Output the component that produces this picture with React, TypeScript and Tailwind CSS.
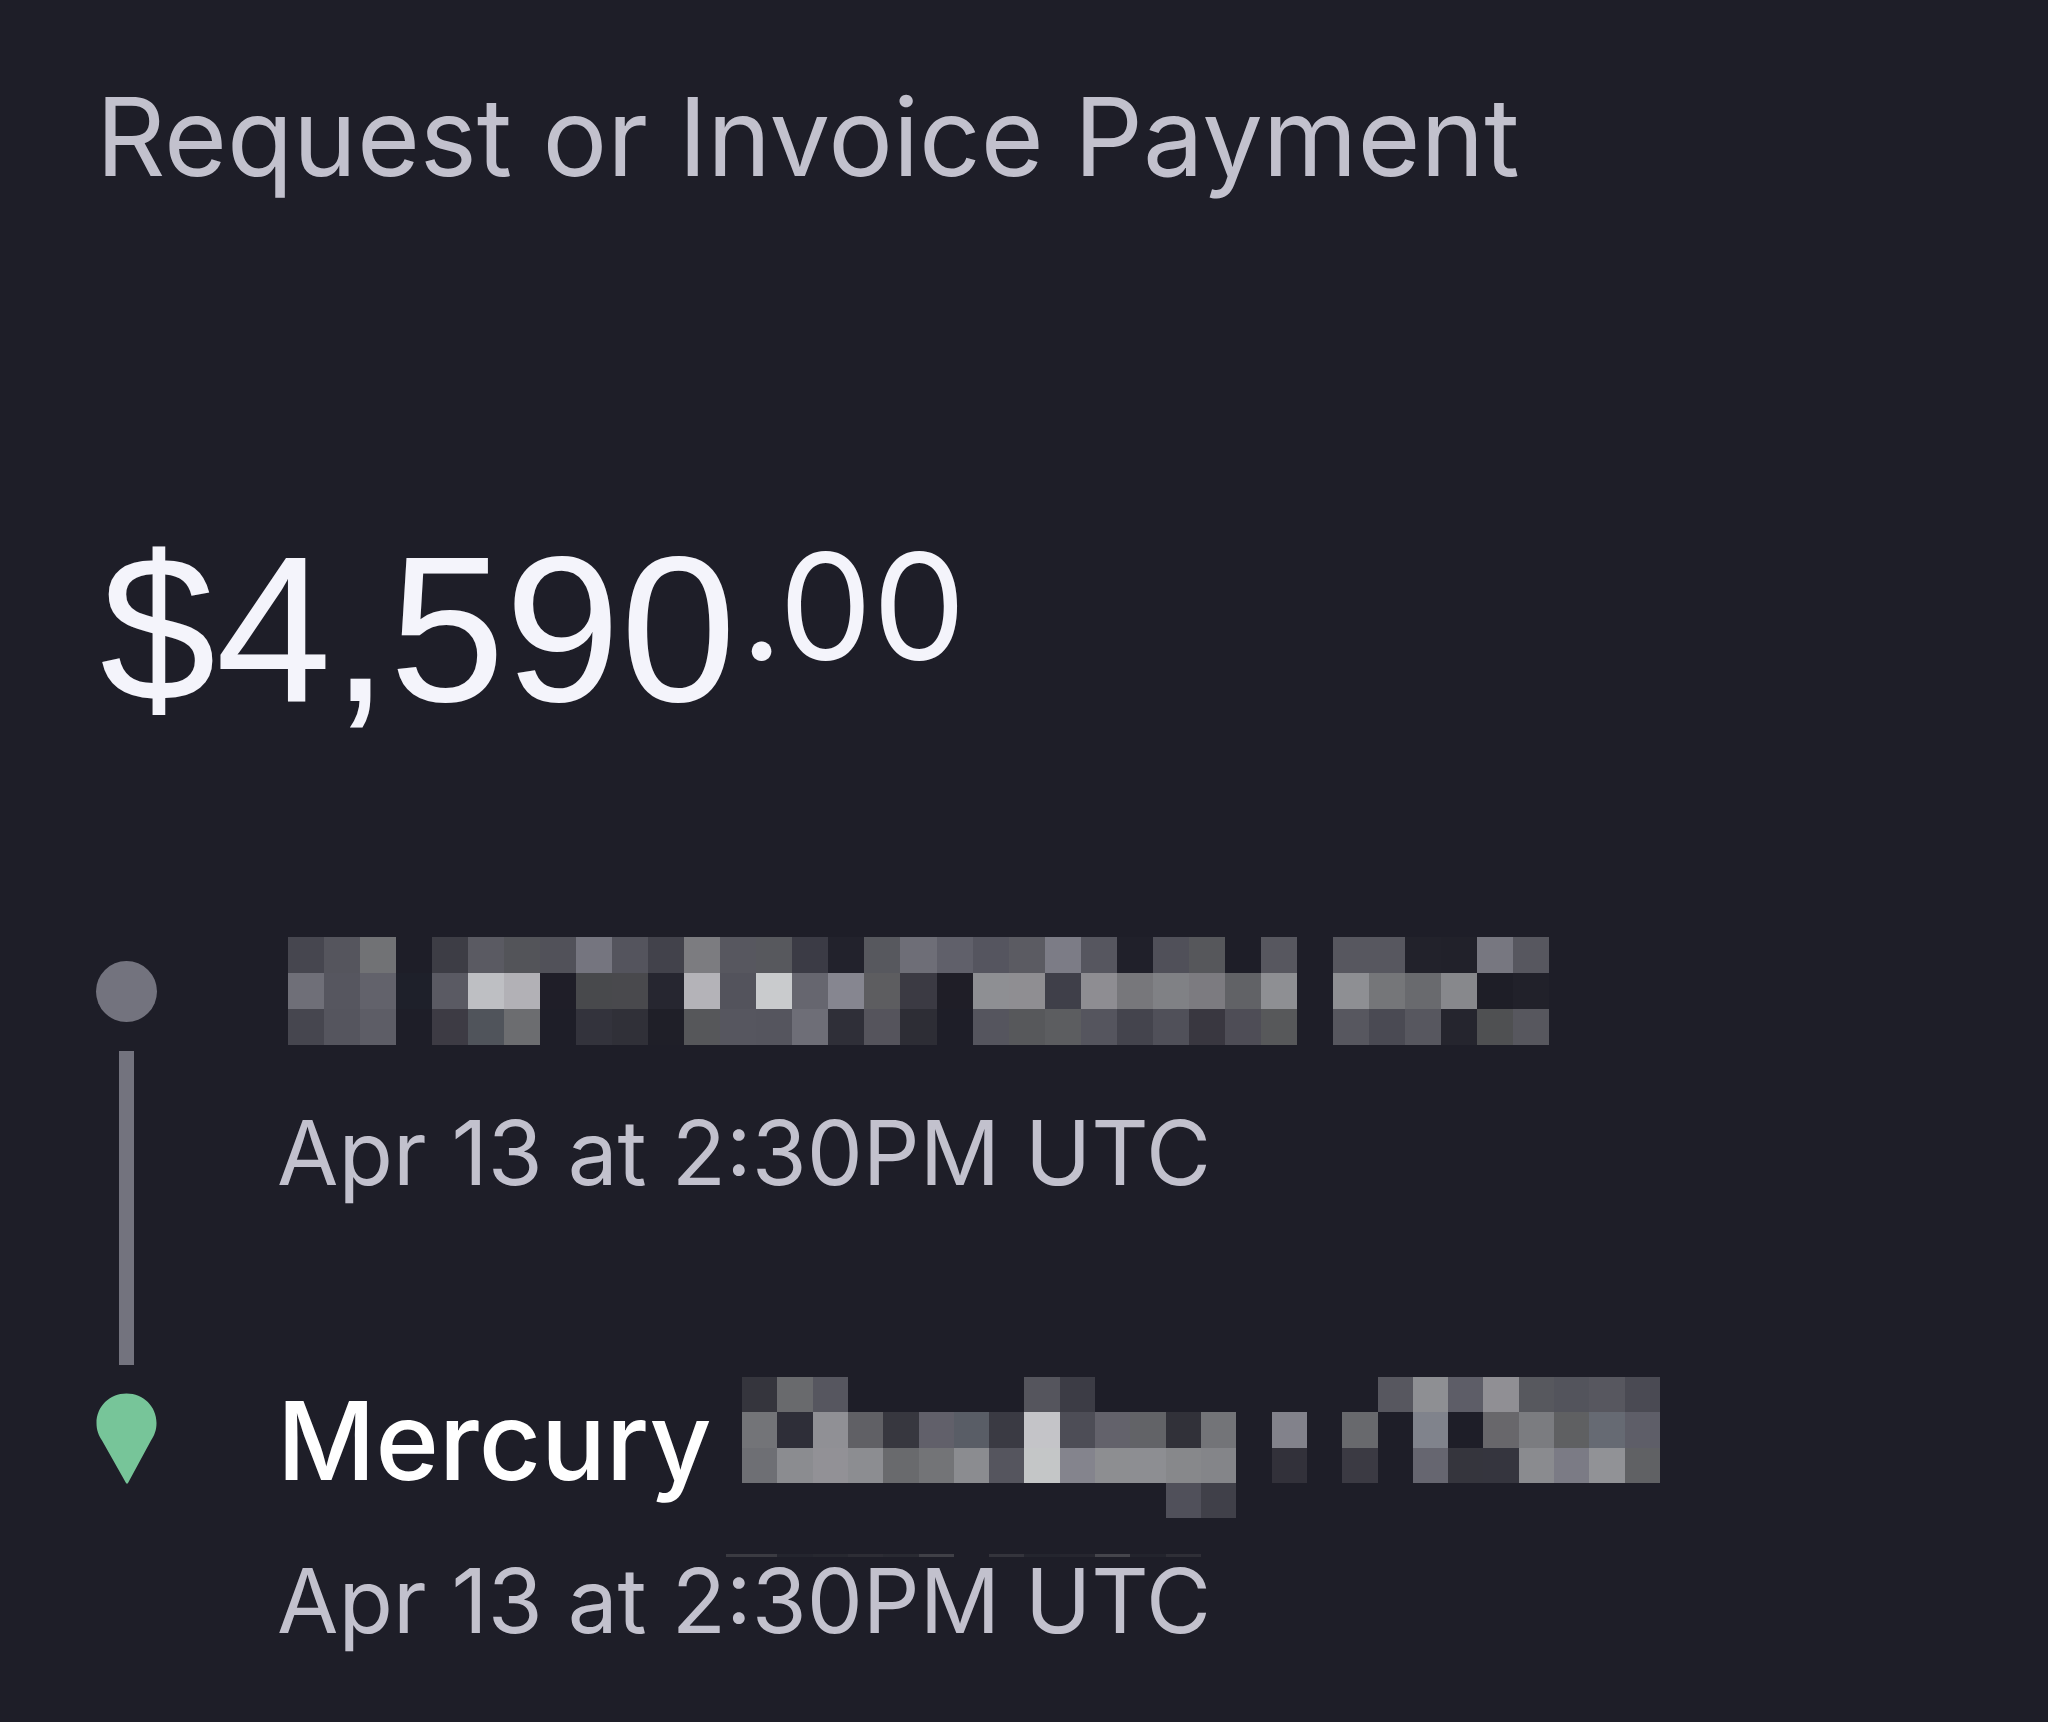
import React from 'react';

interface MosaicProps {
  label: string;
  rows: string[];
  cell: number;
  className: string;
  children?: React.ReactNode;
}

interface StepProps {
  marker: 'dot' | 'pin';
  date: string;
  className?: string;
  children: React.ReactNode;
}

const BLANK = '------';

// One hex colour per cell, left to right
const SENDER_ROWS = [
  '46464f 55555d 717275 ------ 3d3d45 5a5a62 535459 515159 75757f 54545d 42424b 7c7c80 57575f 57585d 3b3b45 22222c 57585e 6e6e77 60606a 55555f 5b5b62 7c7c86 56565f 20202a 505059 56575b ------ 57575f ------ 57575f 57575f 22222b 21212a 777780 57575f',
  '6f6f78 56565f 62626b 1e202a 5a5a63 bebfc3 b2b1b6 1f1e28 48494c 49494d 262630 b4b3b8 53535c c9cbcd 66666f 868690 5d5d60 3b3a43 1f1e27 8e8f93 8f8e92 3f3f49 8e8d92 77777b 808185 7c7b80 616266 8e8f93 ------ 8e8f93 757679 696a6e 87888c 1e1e27 21212a',
  '46464f 55555e 5d5d66 ------ 3d3b44 50545b 6c6d70 ------ 33333c 303038 1f1f28 56575a 56565f 55555e 6e6e77 2f2f38 55545c 2d2d35 ------ 55555e 57585b 5c5d60 55555e 44444d 505059 393740 4e4d56 57585a ------ 57575f 4a4a53 57575f 25252e 4f5052 57575e',
];

const ACCOUNT_ROWS = [
  '35353d 696a6d 56565f ------ ------ ------ ------ ------ 55555d 3c3c45 ------ ------ ------ ------ ------ ------ ------ ------ 57575f 8e8f93 5d5d67 908f94 57585e 53545c 57575f 4a4a53',
  '737478 2e2e38 909095 606065 37373f 61606a 595d66 3a3a43 c4c4c8 4d4d56 63626b 626367 313139 737478 ------ 82828b ------ 68696d ------ 80838c ------ 68676b 7b7c80 5f6062 666a73 5e5e68',
  '6e6f74 8b8c90 929196 8c8d91 696a6d 737477 8b8c90 55555e c4c6c7 84848d 8d8e91 8d8e92 87888b 848589 ------ 32313a ------ 3b3a43 ------ 666670 35353d 35353e 8a8b8f 7b7b85 919296 606164',
  '------ ------ ------ ------ ------ ------ ------ ------ ------ ------ ------ ------ 50505a 404049 ------ ------ ------ ------ ------ ------ ------ ------ ------ ------ ------ ------',
];

// Thin strip left under the account name: x, width, colour
const STRIP: [number, number, string][] = [
  [-16, 51, '#3b3b42'],
  [35, 35, '#24252e'],
  [70, 35, '#272830'],
  [105, 35, '#2d2d35'],
  [140, 35, '#292a32'],
  [175, 35, '#404047'],
  [245, 35, '#34343c'],
  [280, 35, '#24252e'],
  [315, 35, '#26262f'],
  [350, 35, '#45454c'],
  [385, 35, '#23242d'],
  [420, 35, '#2f2f37'],
];

const Mosaic: React.FC<MosaicProps> = ({ label, rows, cell, className, children }) => {
  const cols = rows[0].split(' ').length;
  return (
    <svg
      role="img"
      aria-label={label}
      viewBox={`0 0 ${cols * cell} ${rows.length * cell}`}
      preserveAspectRatio="none"
      shapeRendering="crispEdges"
      className={className}
    >
      {rows.map((row, y) =>
        row.split(' ').map((color, x) =>
          color === BLANK ? null : (
            <rect key={`${x}-${y}`} x={x * cell} y={y * cell} width={cell} height={cell} fill={`#${color}`} />
          ),
        ),
      )}
      {children}
    </svg>
  );
};

const Step: React.FC<StepProps> = ({ marker, date, className = '', children }) => (
  <li className="flex items-stretch">
    {marker === 'dot' ? (
      <div className="flex w-[61px] shrink-0 flex-col items-center gap-[29px] pt-6 pb-3">
        <span className="size-[61px] rounded-full bg-[#73737e]" />
        <span className="w-[15px] flex-1 bg-[#73737e]" />
      </div>
    ) : (
      <div className="w-[61px] shrink-0 pt-4">
        <svg viewBox="0 0 61 91" className="h-[91px] w-[61px]" fill="#77c599" aria-hidden="true">
          <path d="M30.5 0.5C13.5 0.5 0.5 13.5 0.5 30C0.5 37 2.5 42 6 47.5L30 90Q31 91.5 32 90L55 47.5C58.500 42 60.5 37 60.5 30C60.5 13.5 47.5 0.5 30.5 0.5Z" />
        </svg>
      </div>
    )}
    <div className={`min-w-0 flex-1 pl-[120px] ${className}`}>
      {children}
      <p className="text-[89px] leading-[112px] whitespace-nowrap text-[#c2c1cd]">{date}</p>
    </div>
  </li>
);

export default function App() {
  return (
    <main className="min-h-screen overflow-hidden bg-[#1e1e28] px-24 py-16 font-['Inter',sans-serif]">
      <h1 className="text-[108px] leading-[146px] font-normal whitespace-nowrap text-[#c2c1cd]">
        Request or Invoice Payment
      </h1>

      <p className="mt-[299px] flex items-start gap-1 pl-1 text-[#f4f4fb]">
        <span className="font-['Liberation_Sans',Arial,sans-serif] text-[208px] leading-[240px]">$4,590</span>
        <span className="text-[148px] leading-[196px]">.00</span>
      </p>

      <ol className="mt-[188px]">
        <Step marker="dot" date="Apr 13 at 2:30PM UTC" className="pb-42">
          <div className="pb-13 pl-[11px]">
            <Mosaic label="Hidden sender" rows={SENDER_ROWS} cell={36} className="block h-[108px] w-[1261px]" />
          </div>
        </Step>
        <Step marker="pin" date="Apr 13 at 2:30PM UTC">
          <div className="flex h-42 items-start gap-[30px]">
            <h2 className="text-[108px] leading-[128px] font-medium text-white">Mercury</h2>
            <Mosaic
              label="Hidden account"
              rows={ACCOUNT_ROWS}
              cell={35}
              className="block h-[141px] w-[918px] shrink-0 overflow-visible"
            >
              {STRIP.map(([x, width, fill]) => (
                <rect key={x} x={x} y={176} width={width} height={3} fill={fill} />
              ))}
            </Mosaic>
          </div>
        </Step>
      </ol>
    </main>
  );
}
